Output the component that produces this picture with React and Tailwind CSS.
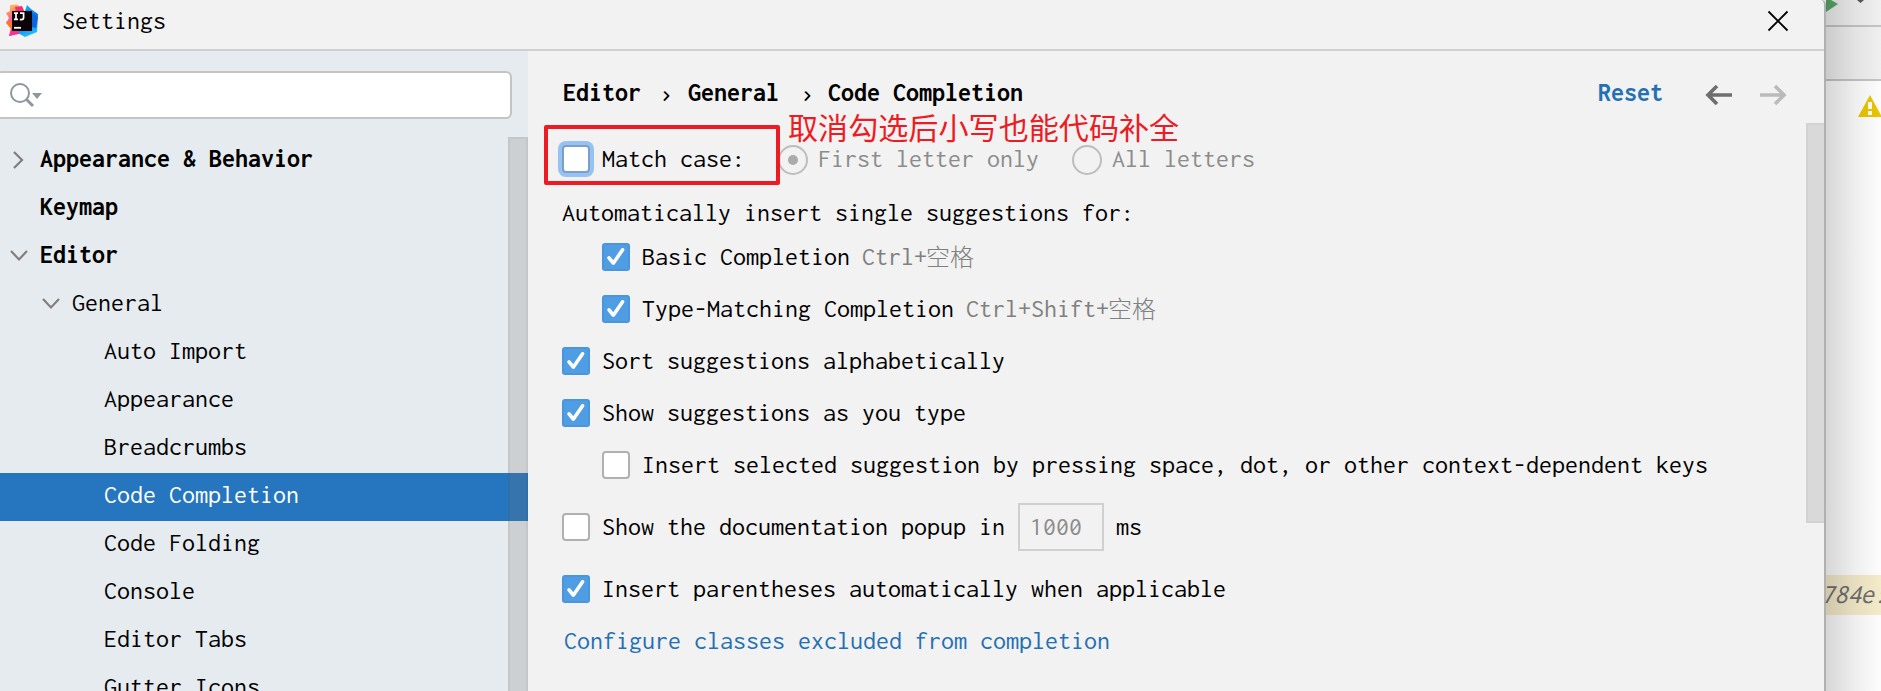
const Check = ({ on = false, focus = false }) => {
  if (on)
    return (
      <span className="flex h-7 w-7 shrink-0 items-center justify-center rounded-[3px] border-2 border-[#4a95db] bg-[#4f9ee3]">
        <svg width="24" height="24" viewBox="0 0 24 24" fill="none" stroke="#fff" strokeWidth="3.6" strokeLinecap="round" strokeLinejoin="round">
          <path d="M5 12.8 L9.3 18.2 L18.6 4.8" />
        </svg>
      </span>
    );
  return (
    <span
      className={
        focus
          ? "h-7 w-7 shrink-0 rounded-[4px] border-2 border-[#7b9fc7] bg-white shadow-[0_0_0_4px_#97c3f3]"
          : "h-7 w-7 shrink-0 rounded-[4px] border-2 border-[#b0b0b0] bg-white"
      }
    />
  );
};

const Radio = ({ on = false }) => (
  <span className="flex h-[30px] w-[30px] shrink-0 items-center justify-center rounded-full border-2 border-[#bdbdbd]">
    {on && <span className="h-2.5 w-2.5 rounded-full bg-[#ababab]" />}
  </span>
);

const Label = ({ children }) => <span className="leading-[28px] whitespace-pre">{children}</span>;

const Option = ({ on, className, children }) => (
  <div className={"flex h-7 gap-3 " + className}>
    <Check on={on} />
    {children}
  </div>
);

const Shortcut = ({ keys }) => (
  <span className="flex leading-[28px] text-[#808080]">
    {keys}
    <span className="-ml-px font-['Noto_Sans_CJK_SC',sans-serif] text-2xl leading-[26px] font-light">空格</span>
  </span>
);

const Chevron = ({ open }) => (
  <svg className={open ? "-mt-px ml-px" : ""} width="20" height="20" viewBox="0 0 20 20" fill="none" stroke="#7f7f7f" strokeWidth="2.2">
    <path d={open ? "M2 6 L10 14.5 L18 6" : "M6 2 L14 10 L6 18"} />
  </svg>
);

const tree = [
  { label: "Appearance & Behavior", pad: "pl-2", arrow: "closed", bold: true },
  { label: "Keymap", pad: "pl-2", arrow: "none", bold: true },
  { label: "Editor", pad: "pl-2", arrow: "open", bold: true },
  { label: "General", pad: "pl-10", arrow: "open" },
  { label: "Auto Import", pad: "pl-[72px]", arrow: "none" },
  { label: "Appearance", pad: "pl-[72px]", arrow: "none" },
  { label: "Breadcrumbs", pad: "pl-[72px]", arrow: "none" },
  { label: "Code Completion", pad: "pl-[72px]", arrow: "none", selected: true },
  { label: "Code Folding", pad: "pl-[72px]", arrow: "none" },
  { label: "Console", pad: "pl-[72px]", arrow: "none" },
  { label: "Editor Tabs", pad: "pl-[72px]", arrow: "none" },
  { label: "Gutter Icons", pad: "pl-[72px]", arrow: "none" },
];

const Logo = () => (
  <svg width="34" height="34" viewBox="0 0 34 34">
    <defs>
      <linearGradient id="warm" x1="0" y1="0" x2="0.3" y2="1">
        <stop offset="0" stopColor="#ffd84a" />
        <stop offset="0.3" stopColor="#fe8a6a" />
        <stop offset="0.6" stopColor="#ff45c0" />
        <stop offset="1" stopColor="#ff2d6e" />
      </linearGradient>
      <linearGradient id="cool" x1="0" y1="0" x2="0.3" y2="1">
        <stop offset="0" stopColor="#14c8f5" />
        <stop offset="0.55" stopColor="#0a72ea" />
        <stop offset="1" stopColor="#20b8f8" />
      </linearGradient>
    </defs>
    <path d="M5 1 L12 0.5 L20 8 L20 27 L4 32 L6 24 L1 19 L4 14 L1 9 L5 7 Z" fill="url(#warm)" />
    <path d="M1 18 L9 17 L9 25 L5 24 Z" fill="#ff7a10" />
    <path d="M10 3 L17 2 L20 9 L11 9 Z" fill="#f72c6d" />
    <path d="M4 32 L8 23 L19 27 L14 30 Z" fill="#ff2f92" />
    <path d="M22 1 L26 5 L33 10 L32 28 L20 33 L13 29 L14 25 L20 7 Z" fill="url(#cool)" />
    <path d="M27 9 L33 13 L31 24 L27 23 Z" fill="#0b66de" />
    <rect x="7" y="7" width="20" height="20" fill="#0b0307" />
    <path d="M9 9.2 H13 M11 9.2 V15.4 M9 15.4 H13 M15 9.2 H18.6 V13.6 Q18.6 15.6 16.6 15.6 H14.8" fill="none" stroke="#fff" strokeWidth="1.7" />
    <path d="M9 23.8 H16" stroke="#fff" strokeWidth="1.8" />
  </svg>
);

export default function App() {
  return (
    <div className="relative flex h-[691px] w-[1881px] overflow-hidden bg-[#e0e0e0] font-['Inconsolata','DejaVu_Sans_Mono',monospace] text-[26px] leading-[28px] text-black">
      <div className="flex h-full w-[1826px] shrink-0 flex-col rounded-tr-[5px] border-r-2 border-[#b0b0b0] bg-[#f2f2f2]">
        <header className="flex h-[51px] shrink-0 items-start border-b-2 border-[#cfcfcf] pl-[5px]">
          <span className="mt-1">
            <Logo />
          </span>
          <span className="mt-[7px] ml-[23px]">Settings</span>
          <svg className="mt-[10px] mr-[35px] ml-auto" width="22" height="22" viewBox="0 0 22 22" stroke="#000" strokeWidth="1.8">
            <path d="M1.5 1.5 L20.5 20.5 M20.5 1.5 L1.5 20.5" />
          </svg>
        </header>

        <div className="flex min-h-0 flex-1">
          <aside className="flex w-[528px] shrink-0 flex-col bg-[#e6ebef] pt-5">
            <div className="-ml-1 flex h-12 w-[516px] shrink-0 items-center rounded-[6px] border-2 border-[#c4c4c4] bg-white pl-3">
              <svg width="34" height="28" viewBox="0 0 34 28" fill="none" stroke="#8d979e">
                <circle cx="10" cy="12" r="9" strokeWidth="2" />
                <path d="M16.3 18.3 L23 25" strokeWidth="3" />
                <path d="M22 12 H32 L27 18 Z" fill="#8d979e" stroke="none" />
              </svg>
            </div>
            <div className="relative mt-[18px] min-h-0 flex-1 overflow-hidden">
              {tree.map((n) => (
                <div
                  key={n.label}
                  className={
                    "flex h-12 items-start pt-2 " + n.pad + (n.selected ? " bg-[#2675bf] text-white" : "") + (n.bold ? " font-bold" : "")
                  }
                >
                  <span className="mt-[5px] w-8 shrink-0">{n.arrow !== "none" && <Chevron open={n.arrow === "open"} />}</span>
                  <Label>{n.label}</Label>
                </div>
              ))}
              <div className="absolute top-0 right-0 h-full w-5 border-2 border-b-0 border-black/4 bg-[#737373]/22" />
            </div>
          </aside>

          <main className="flex min-w-0 flex-1 flex-col pl-[34px]">
            <div className="mt-7 flex h-[30px] shrink-0 items-start font-bold">
              <span className="w-[97px] pl-px">Editor</span>
              <span className="w-[28px] text-[30px] font-normal">›</span>
              <span className="w-[113px] pl-px">General</span>
              <span className="w-[28px] text-[30px] font-normal">›</span>
              <span>Code Completion</span>
              <span className="ml-auto text-[#2470b3]">Reset</span>
              <svg className="mt-[5px] ml-[42px]" width="28" height="22" viewBox="0 0 28 22" fill="none" stroke="#6e6e6e" strokeWidth="3.6">
                <path d="M27 11 H3 M12 2 L3 11 L12 20" />
              </svg>
              <svg className="mt-[5px] mr-[37px] ml-[26px]" width="28" height="22" viewBox="0 0 28 22" fill="none" stroke="#bababa" strokeWidth="3.6">
                <path d="M1 11 H25 M16 2 L25 11 L16 20" />
              </svg>
            </div>

            <div className="flex min-h-0 flex-1">
              <div className="flex flex-1 flex-col">
                <div className="mt-9 flex h-7 gap-3">
                  <Check focus />
                  <span className="w-[164px]">Match case:</span>
                  <div className="flex gap-[10px] text-[#8c8c8c]">
                    <Radio on />
                    <span className="w-[244px]">First letter only</span>
                    <Radio />
                    <Label>All letters</Label>
                  </div>
                </div>
                <div className="mt-[26px] h-[27px] shrink-0">Automatically insert single suggestions for:</div>
                <Option on className="mt-[17px] ml-10">
                  <Label>Basic Completion</Label>
                  <Shortcut keys="Ctrl+" />
                </Option>
                <Option on className="mt-6 ml-10">
                  <Label>Type-Matching Completion</Label>
                  <Shortcut keys="Ctrl+Shift+" />
                </Option>
                <Option on className="mt-6">
                  <Label>Sort suggestions alphabetically</Label>
                </Option>
                <Option on className="mt-6">
                  <Label>Show suggestions as you type</Label>
                </Option>
                <Option className="mt-6 ml-10">
                  <Label>Insert selected suggestion by pressing space, dot, or other context-dependent keys</Label>
                </Option>
                <Option className="mt-[34px]">
                  <Label>Show the documentation popup in</Label>
                  <span className="-mt-2.5 ml-px h-12 w-[86px] shrink-0 border-2 border-[#d0d0d0] pt-2 pl-[10px] text-[#8c8c8c]">1000</span>
                  <Label>ms</Label>
                </Option>
                <Option on className="mt-[34px]">
                  <Label>Insert parentheses automatically when applicable</Label>
                </Option>
                <a className="mt-6 ml-[2px] text-[#2470b3]">Configure classes excluded from completion</a>
              </div>
              <div className="mt-[14px] h-[400px] w-[18px] shrink-0 border-2 border-r-0 border-[#d2d2d2] bg-[#d9d9d9]" />
            </div>
          </main>
        </div>
      </div>

      <div className="relative flex w-[55px] flex-col">
        <div className="h-[27px] shrink-0 border-b-2 border-[#c6c6c6] bg-[#f2f2f2]">
          <svg width="55" height="25" viewBox="0 0 55 25">
            <path d="M0 0 H5 L12 4 L0 12 Z" fill="#59a869" />
            <path d="M31 0 H38 L34.5 3 Z" fill="#5a5a5a" />
          </svg>
        </div>
        <div className="h-[54px] shrink-0 border-b-2 border-[#c6c6c6] bg-[#f2f2f2]" />
        <div className="flex flex-1 flex-col bg-white">
          <svg className="mt-[14px] ml-8 shrink-0" width="24" height="22" viewBox="0 0 24 22">
            <path d="M12 0 L24 22 H0 Z" fill="#ebc700" />
            <path d="M10 7 H14 V14 H10 Z M10 16 H14 V20 H10 Z" fill="#fff" />
          </svg>
          <div className="mt-[458px] flex h-10 shrink-0 items-start bg-[#f6edcb] pt-[5px]">
            <span className="-ml-[5px] text-[27px] tracking-[-0.3px] whitespace-nowrap text-[#707070] italic">784e:</span>
          </div>
        </div>
        <div className="absolute inset-0 bg-linear-to-r from-black/16 via-black/7 to-black/1" />
      </div>

      <div className="absolute top-[125px] left-[544px] h-[60px] w-[236px] rounded-[2px] border-4 border-[#ed1c24]" />
      <div className="absolute top-[107px] left-[788px] font-['Noto_Sans_CJK_SC',sans-serif] text-[30.1px] leading-[38px] whitespace-nowrap text-[#ed1c24]">
        取消勾选后小写也能代码补全
      </div>
    </div>
  );
}
